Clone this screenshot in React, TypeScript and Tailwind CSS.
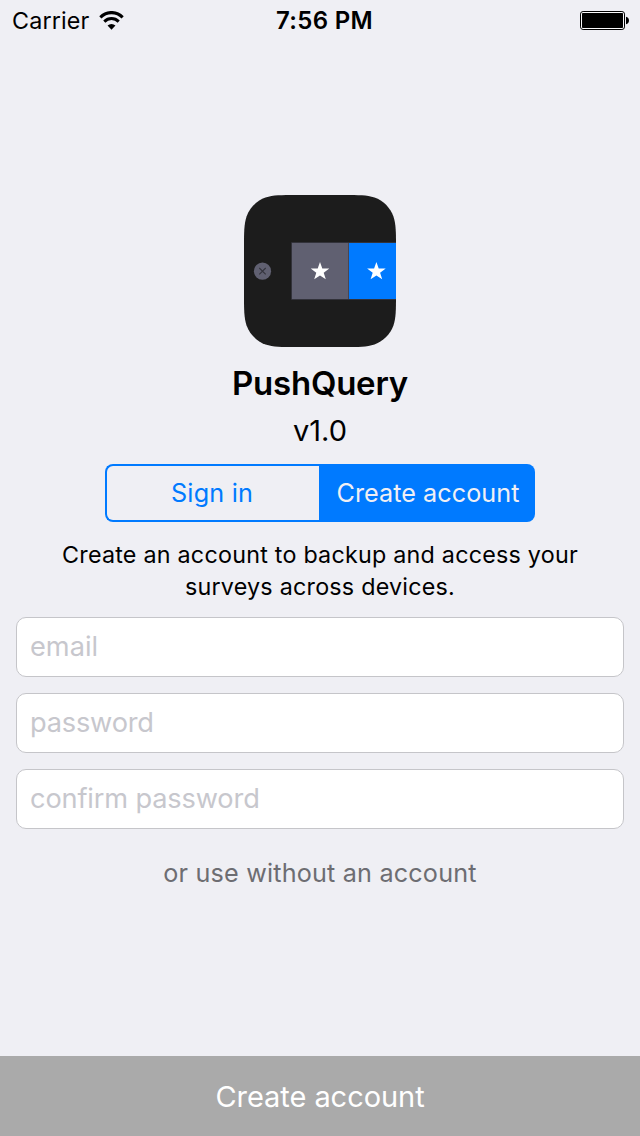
function WifiIcon() {
  return (
    <svg width="25" height="20" viewBox="0 0 26 20" fill="none" stroke="#000" preserveAspectRatio="none" className="shrink-0">
      <path d="M1.4 6.3A16.6 16.6 0 0 1 24.6 6.3" strokeWidth="3.2" />
      <path d="M5.5 10.6A10.8 10.8 0 0 1 20.5 10.6" strokeWidth="3.1" />
      <path d="M13 18.8L8.9 14.6A6 6 0 0 1 17.1 14.6Z" fill="#000" stroke="none" />
    </svg>
  );
}

function BatteryIcon() {
  return (
    <svg width="50" height="20" viewBox="0 0 50 20" className="shrink-0">
      <rect x="0.5" y="0.5" width="44" height="18" rx="2.6" fill="#fafafc" stroke="#000" />
      <rect x="2" y="2" width="41" height="15" rx="0.8" fill="#000" />
      <path d="M46 5.8C47.8 6.2 49 7.6 49 9.5S47.8 12.8 46 13.2Z" fill="#000" />
    </svg>
  );
}

function Logo() {
  const star = "0,-9.4 2.3,-2.7 9.3,-2.7 3.7,1.5 5.8,8 0,4.1 -5.8,8 -3.7,1.5 -9.3,-2.7 -2.3,-2.7";
  return (
    <svg width="152" height="152" viewBox="0 0 152 152">
      <defs>
        <clipPath id="tile">
          <path d="M51.97 0H100.03C114.99 0 122.47 0 130.53 2.55C139.32 5.75 146.25 12.68 149.45 21.47C152 29.53 152 37.01 152 51.97V100.03C152 114.99 152 122.47 149.45 130.53C146.25 139.32 139.32 146.25 130.53 149.45C122.47 152 114.99 152 100.03 152H51.97C37.01 152 29.53 152 21.47 149.45C12.68 146.25 5.75 139.32 2.55 130.53C0 122.47 0 114.99 0 100.03V51.97C0 37.01 0 29.53 2.55 21.47C5.75 12.68 12.68 5.75 21.47 2.55C29.53 0 37.01 0 51.97 0Z" />
        </clipPath>
      </defs>
      <g clipPath="url(#tile)">
        <rect width="152" height="152" fill="#1c1c1c" />
        <rect x="47.3" y="47.3" width="110" height="57.4" fill="#3c3c48" />
        <rect x="48" y="48" width="56.3" height="56" fill="#606071" />
        <rect x="105" y="48" width="50" height="56" fill="#007aff" />
        <circle cx="18.5" cy="76.2" r="8.6" fill="#606071" />
        <path d="M15.3 73L21.7 79.4M21.7 73L15.3 79.4" stroke="#34343d" strokeWidth="1.1" />
        <polygon points={star} fill="#fff" transform="translate(76 76.3)" />
        <polygon points={star} fill="#fff" transform="translate(132.4 76.3)" />
      </g>
    </svg>
  );
}

function Field({ label, type, spacing }: { label: string; type: string; spacing: string }) {
  return (
    <input
      type={type}
      placeholder={label}
      className={`block h-[60px] w-full rounded-[10px] border border-[#c5c5c9] bg-white pr-3 pb-0.5 pl-[13px] text-[27.2px] leading-[34px] outline-none placeholder:text-[#c7c7cd] placeholder:opacity-100 ${spacing}`}
    />
  );
}

export default function App() {
  return (
    <div className="flex h-[1136px] w-[640px] flex-col bg-[#efeff4] font-['Inter',sans-serif] text-black">
      <header className="grid h-[41px] shrink-0 grid-cols-3 items-center pr-[10px] pl-3">
        <div className="flex items-center gap-2.5 text-[23.3px] leading-[41px] tracking-[0.15px]">
          <span>Carrier</span>
          <WifiIcon />
        </div>
        <div className="pl-[7px] text-center text-[24px] leading-[41px] font-semibold tracking-[0.3px]">7:56 PM</div>
        <div className="flex justify-end">
          <BatteryIcon />
        </div>
      </header>

      <main className="flex grow flex-col items-center px-4 pt-[154px]">
        <Logo />
        <h1 className="mt-[18px] text-[33px] leading-9 font-semibold tracking-[-0.25px]">PushQuery</h1>
        <p className="mt-[11px] text-[29px] leading-[37px]">v1.0</p>

        <div className="mt-[15px] flex h-[58px] w-[430px] text-[25.2px]">
          <button className="w-[214px] rounded-l-lg border-2 border-r-0 border-[#007aff] pt-0.5 pr-0.5 tracking-[0.2px] text-[#007aff]">
            Sign in
          </button>
          <button className="grow rounded-r-lg bg-[#007aff] pt-0.5 pl-0.5 tracking-[0.05px] text-[#efeff4]">
            Create account
          </button>
        </div>

        <p className="mt-[17px] text-center text-[23.3px] leading-8 tracking-[0.23px]">
          Create an account to backup and access your
          <br />
          surveys across devices.
        </p>

        <form className="mt-[14px] flex w-full flex-col gap-4">
          <Field label="email" type="email" spacing="tracking-[0px]" />
          <Field label="password" type="password" spacing="tracking-[-0.2px]" />
          <Field label="confirm password" type="password" spacing="tracking-[-0.15px]" />
        </form>

        <a className="mt-7 text-[25.2px] leading-8 tracking-[0.18px] text-[#6d6d72]">or use without an account</a>
      </main>

      <button className="h-20 shrink-0 bg-[#aaaaaa] pt-0.5 text-[29px] tracking-[-0.05px] text-white">Create account</button>
    </div>
  );
}
